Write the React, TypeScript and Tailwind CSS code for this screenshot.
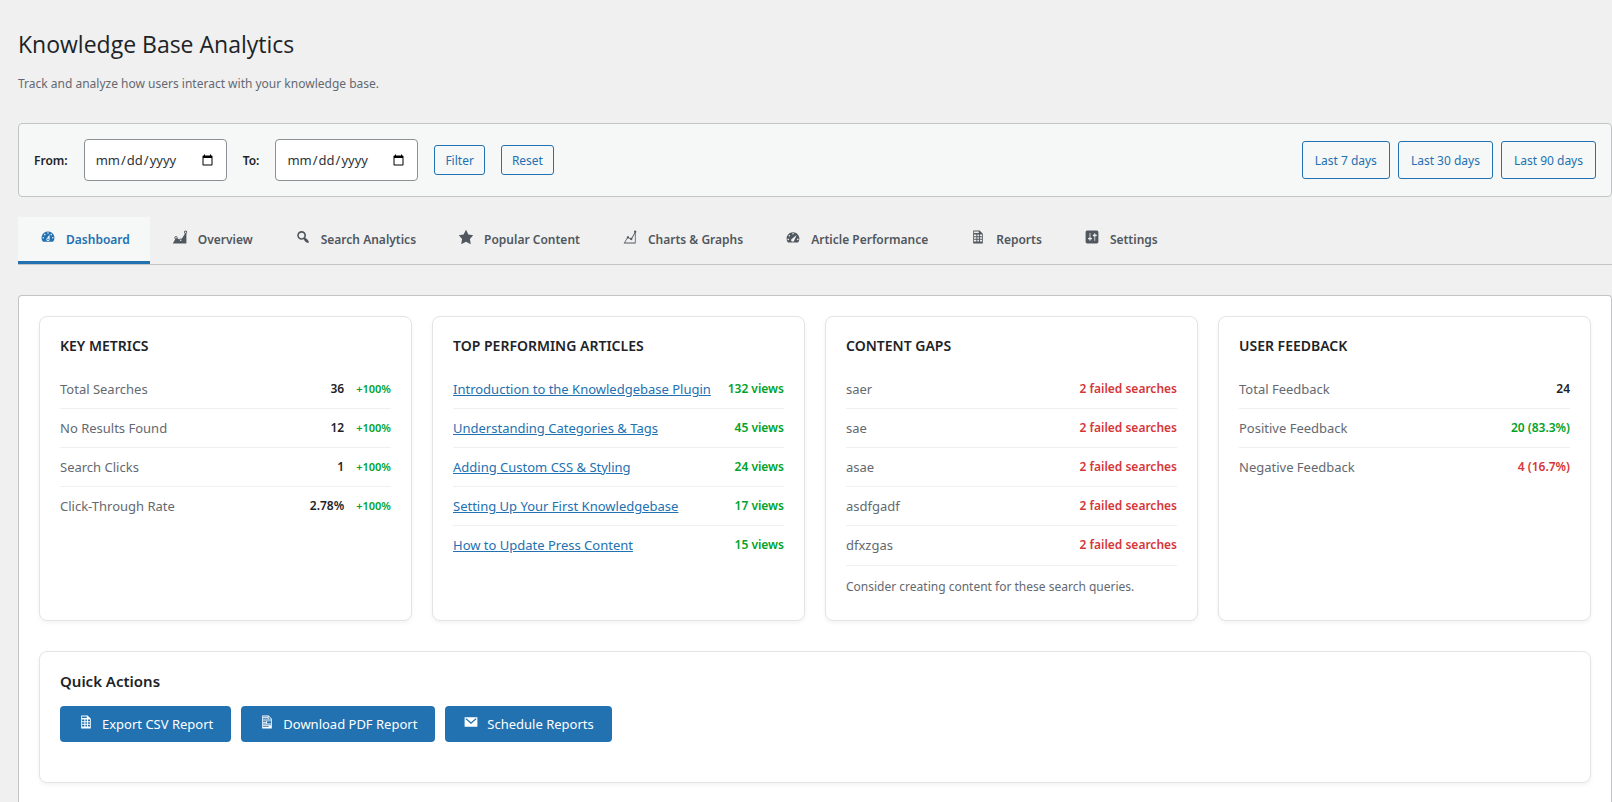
import type { ReactNode } from "react";
import clsx from "clsx";

const icons = {
  dashboard:
    "M3.76 16h12.48A7.998 7.998 0 0 0 10 3a7.998 7.998 0 0 0-6.24 13zM10 4c.55 0 1 .45 1 1s-.45 1-1 1-1-.45-1-1 .45-1 1-1zM6 6c.55 0 1 .45 1 1s-.45 1-1 1-1-.45-1-1 .45-1 1-1zm8 0c.55 0 1 .45 1 1s-.45 1-1 1-1-.45-1-1 .45-1 1-1zm-5.37 5.55L12 7v6c0 1.1-.9 2-2 2s-2-.9-2-2c0-.57.24-1.08.63-1.45zM4 10c.55 0 1 .45 1 1s-.45 1-1 1-1-.45-1-1 .45-1 1-1zm12 0c.55 0 1 .45 1 1s-.45 1-1 1-1-.45-1-1 .45-1 1-1zm-5 3c0-.55-.45-1-1-1s-1 .45-1 1 .45 1 1 1 1-.45 1-1z",
  area: "M18 18l.01-12.28c.59-.35.99-.99.99-1.72 0-1.1-.9-2-2-2s-2 .9-2 2c0 .8.47 1.48 1.14 1.8l-4.13 6.58c-.33-.24-.73-.38-1.16-.38-.84 0-1.55.51-1.85 1.24l-2.14-1.53c.09-.22.14-.46.14-.71 0-1.11-.89-2-2-2-1.1 0-2 .89-2 2 0 .73.4 1.36.98 1.71L1 18h17zM17 3c.55 0 1 .45 1 1s-.45 1-1 1-1-.45-1-1 .45-1 1-1zM5 10c.55 0 1 .45 1 1s-.45 1-1 1-1-.45-1-1 .45-1 1-1zm5.85 3c.55 0 1 .45 1 1s-.45 1-1 1-1-.45-1-1 .45-1 1-1z",
  search:
    "M12.14 4.18c1.87 1.87 2.11 4.75.72 6.89.12.1.22.21.36.31.2.16.47.36.81.59.34.24.56.39.66.47.42.31.73.57.94.78.32.32.6.65.84 1 .25.35.44.69.59 1.04.14.35.21.68.18 1-.02.32-.14.59-.36.81s-.49.34-.81.36c-.31.02-.65-.04-.99-.19-.35-.14-.7-.34-1.04-.59-.35-.24-.68-.52-1-.84-.21-.21-.47-.52-.77-.93-.1-.13-.25-.35-.47-.66-.22-.32-.4-.57-.56-.78-.16-.2-.29-.35-.44-.5-2.07 1.09-4.69.76-6.44-.98-2.14-2.15-2.14-5.64 0-7.78 2.15-2.15 5.63-2.15 7.78 0zm-1.41 6.36c1.36-1.37 1.36-3.58 0-4.95-1.37-1.37-3.59-1.37-4.95 0-1.37 1.37-1.37 3.58 0 4.95 1.36 1.37 3.58 1.37 4.95 0z",
  star: "M10 1l3 6 6 .75-4.12 4.62L16 19l-6-3-6 3 1.13-6.63L1 7.75 7 7z",
  line: "M18 3.5c0 .62-.38 1.16-.92 1.38v13.11H1.99l4.22-6.73c-.13-.23-.21-.48-.21-.76C6 9.67 6.67 9 7.5 9S9 9.67 9 10.5c0 .13-.02.25-.05.37l1.44.63c.27-.3.67-.5 1.11-.5.18 0 .35.04.51.09l3.58-6.41c-.36-.27-.59-.7-.59-1.18 0-.83.67-1.5 1.5-1.5.19 0 .36.04.53.1l.05-.09v.11c.54.22.92.76.92 1.38zm-1.92 13.49V5.85l-3.29 5.89c.13.23.21.48.21.76 0 .83-.67 1.5-1.5 1.5s-1.5-.67-1.5-1.5l.01-.07-1.63-.72c-.25.18-.55.29-.88.29-.18 0-.35-.04-.51-.1l-3.2 5.09h12.29z",
  performance:
    "M3.76 17h12.48C17.34 15.63 18 13.9 18 12c0-4.41-3.58-8-8-8s-8 3.59-8 8c0 1.9.66 3.63 1.76 5zM9 6c0-.55.45-1 1-1s1 .45 1 1-.45 1-1 1-1-.45-1-1zM4.5 8.5c0-.55.45-1 1-1s1 .45 1 1-.45 1-1 1-1-.45-1-1zM3 13c0-.55.45-1 1-1s1 .45 1 1-.45 1-1 1-1-.45-1-1zm12 0c0-.55.45-1 1-1s1 .45 1 1-.45 1-1 1-1-.45-1-1zm-6.56-.64l6.06-4.86-3.1 7.1c-.45 1-1.6 1.6-2.6 1.15s-1.45-1.5-1-2.5c.15-.35.35-.65.64-.89z",
  spreadsheet:
    "M12 2l4 4v12H4V2h8zM11 5V3H5v2zM8 9V7H5v2zM11.200 9V7H9.200v2zM15 9V7h-2.600v2zM8 12.200v-2H5v2zM11.200 12.200v-2H9.200v2zM15 12.200v-2h-2.600v2zM8 15.600v-2.200H5v2.200zM11.200 15.600v-2.200H9.200v2.200zM15 15.600v-2.200h-2.600v2.200z",
  settings:
    "M18 16V4c0-1.1-.9-2-2-2H4c-1.1 0-2 .9-2 2v12c0 1.1.9 2 2 2h12c1.1 0 2-.9 2-2zM8 11h1c.55 0 1 .45 1 1s-.45 1-1 1H8v1.5c0 .28-.22.5-.5.5s-.5-.22-.5-.5V13H6c-.55 0-1-.45-1-1s.45-1 1-1h1V5.5c0-.28.22-.5.5-.5s.5.22.5.5V11zm5-2h-1c-.55 0-1-.45-1-1s.45-1 1-1h1V5.5c0-.28.22-.5.5-.5s.5.22.5.5V7h1c.55 0 1 .45 1 1s-.45 1-1 1h-1v5.5c0 .28-.22.5-.5.5s-.5-.22-.5-.5V9z",
  document:
    "M12 2l4 4v12H4V2h8zM5 3v1h6V3H5zm7 3h3l-3-3v3zM5 5v1h6V5H5zm10 3V7H5v1h10zM5 9v1h4V9H5zm10 3V9h-5v3h5zM5 11v1h4v-1H5zm10 3v-1H5v1h10zm-3 2v-1H5v1h7z",
  email:
    "M18 4.5v11c0 .28-.22.5-.5.5h-15c-.28 0-.5-.22-.5-.5v-11c0-.28.22-.5.5-.5h15c.28 0 .5.22.5.5zM17 6.2l-1.1-1L10 10.4 4.1 5.2 3 6.2l7 6.4z",
};

type IconName = keyof typeof icons;

const tabs: { label: string; icon: IconName }[] = [
  { label: "Dashboard", icon: "dashboard" },
  { label: "Overview", icon: "area" },
  { label: "Search Analytics", icon: "search" },
  { label: "Popular Content", icon: "star" },
  { label: "Charts & Graphs", icon: "line" },
  { label: "Article Performance", icon: "performance" },
  { label: "Reports", icon: "spreadsheet" },
  { label: "Settings", icon: "settings" },
];

const metrics = [
  { label: "Total Searches", value: "36", change: "+100%" },
  { label: "No Results Found", value: "12", change: "+100%" },
  { label: "Search Clicks", value: "1", change: "+100%" },
  { label: "Click-Through Rate", value: "2.78%", change: "+100%" },
];

const articles = [
  { title: "Introduction to the Knowledgebase Plugin", views: 132 },
  { title: "Understanding Categories & Tags", views: 45 },
  { title: "Adding Custom CSS & Styling", views: 24 },
  { title: "Setting Up Your First Knowledgebase", views: 17 },
  { title: "How to Update Press Content", views: 15 },
];

const gaps = ["saer", "sae", "asae", "asdfgadf", "dfxzgas"];

const actions: { label: string; icon: IconName }[] = [
  { label: "Export CSV Report", icon: "spreadsheet" },
  { label: "Download PDF Report", icon: "document" },
  { label: "Schedule Reports", icon: "email" },
];

const Icon = ({ name }: { name: IconName }) => (
  <span className="flex h-5 w-5 shrink-0 items-center justify-center">
    <svg viewBox="0 0 20 20" className="h-4 w-4" fill="currentColor" fillRule="evenodd" aria-hidden="true">
      <path d={icons[name]} />
    </svg>
  </span>
);

const DateField = ({ id, label }: { id: string; label: string }) => (
  <>
    <label htmlFor={id} className="pt-0.5 font-semibold">
      {label}
    </label>
    <input
      id={id}
      type="date"
      className="h-[42px] w-[143px] rounded border border-[#8c8f94] bg-white px-[10px] text-[13px] text-[#2c3338]"
    />
  </>
);

const Card = ({ title, children }: { title: string; children: ReactNode }) => (
  <section className="rounded-lg border border-[#e2e4e7] bg-white p-5 shadow-[0_2px_4px_rgba(0,0,0,0.05)]">
    <h2 className="mb-[15px] text-sm leading-[18px] font-semibold uppercase">{title}</h2>
    {children}
  </section>
);

const Row = ({ label, children }: { label: ReactNode; children: ReactNode }) => (
  <li className="flex h-[39px] items-center justify-between border-b border-[#f0f0f1] last:border-transparent">
    <span className="text-[13px] text-[#646970]">{label}</span>
    <span className="font-semibold">{children}</span>
  </li>
);

export default function App() {
  return (
    <div className="min-h-screen bg-[#f0f0f0] pt-[29px] pl-[18px] font-['Noto_Sans','Open_Sans',sans-serif] text-xs leading-[18px] text-[#1d2327]">
      <h1 className="font-['Open_Sans','Noto_Sans',sans-serif] text-[23px] leading-[30px]">
        Knowledge Base Analytics
      </h1>
      <p className="mt-4 text-[#646970]">
        Track and analyze how users interact with your knowledge base.
      </p>

      <form className="mt-[30px] flex items-center justify-between rounded border border-[#c3c4c7] bg-[#f6f7f7] p-[15px]">
        <div className="flex items-center gap-4">
          <DateField id="from" label="From:" />
          <DateField id="to" label="To:" />
          <button type="button" className="h-[30px] rounded-[3px] border border-[#2271b1] px-[10px] pt-0.5 text-[#2271b1]">
            Filter
          </button>
          <button type="reset" className="h-[30px] rounded-[3px] border border-[#2271b1] px-[10px] pt-0.5 text-[#2271b1]">
            Reset
          </button>
        </div>
        <div className="flex gap-2">
          {[7, 30, 90].map((days) => (
            <button
              key={days}
              type="button"
              className="h-[38px] rounded-[3px] border border-[#2271b1] px-3 pt-0.5 text-[#2271b1]"
            >
              {`Last ${days} days`}
            </button>
          ))}
        </div>
      </form>

      <nav className="mt-5 flex border-b border-[#c3c4c7]">
        {tabs.map(({ label, icon }, i) => (
          <a
            key={label}
            href="#"
            className={clsx(
              "flex h-[47px] gap-2 border-b-3 px-5 pt-[10px] font-semibold",
              i === 0
                ? "border-[#2271b1] bg-[#f6f7f7] text-[#2271b1]"
                : "border-transparent text-[#50575e]"
            )}
          >
            <Icon name={icon} />
            <span className="pt-1">{label}</span>
          </a>
        ))}
      </nav>

      <main className="mt-[30px] rounded-t border border-b-0 border-[#c3c4c7] bg-white p-5">
        <div className="grid grid-cols-4 gap-5">
          <Card title="Key Metrics">
            <ul>
              {metrics.map(({ label, value, change }) => (
                <Row key={label} label={label}>
                  {value}
                  <span className="ml-3 text-[11px] text-[#00a32a]">{change}</span>
                </Row>
              ))}
            </ul>
          </Card>
          <Card title="Top Performing Articles">
            <ul>
              {articles.map(({ title, views }) => (
                <Row
                  key={title}
                  label={
                    <a href="#" className="text-[#2271b1] underline">
                      {title}
                    </a>
                  }
                >
                  <span className="text-[#00a32a]">{`${views} views`}</span>
                </Row>
              ))}
            </ul>
          </Card>
          <Card title="Content Gaps">
            <ul className="border-b border-[#f0f0f1]">
              {gaps.map((term) => (
                <Row key={term} label={term}>
                  <span className="text-[#d63638]">2 failed searches</span>
                </Row>
              ))}
            </ul>
            <p className="pt-3 pb-1 text-[#646970]">Consider creating content for these search queries.</p>
          </Card>
          <Card title="User Feedback">
            <ul>
              <Row label="Total Feedback">24</Row>
              <Row label="Positive Feedback">
                <span className="text-[#00a32a]">20 (83.3%)</span>
              </Row>
              <Row label="Negative Feedback">
                <span className="text-[#d63638]">4 (16.7%)</span>
              </Row>
            </ul>
          </Card>
        </div>

        <section className="mt-[30px] rounded-lg border border-[#e2e4e7] bg-white px-5 pt-5 pb-10 shadow-[0_2px_4px_rgba(0,0,0,0.05)]">
          <h2 className="mb-4 text-[15px] leading-[18px] font-semibold">Quick Actions</h2>
          <div className="flex gap-[10px]">
            {actions.map(({ label, icon }) => (
              <button
                key={label}
                type="button"
                className="flex h-9 gap-[6px] rounded bg-[#2271b1] pt-[6px] pr-[18px] pl-4 text-[13px] leading-5 text-white"
              >
                <Icon name={icon} />
                <span className="pt-[2px]">{label}</span>
              </button>
            ))}
          </div>
        </section>
      </main>
    </div>
  );
}
